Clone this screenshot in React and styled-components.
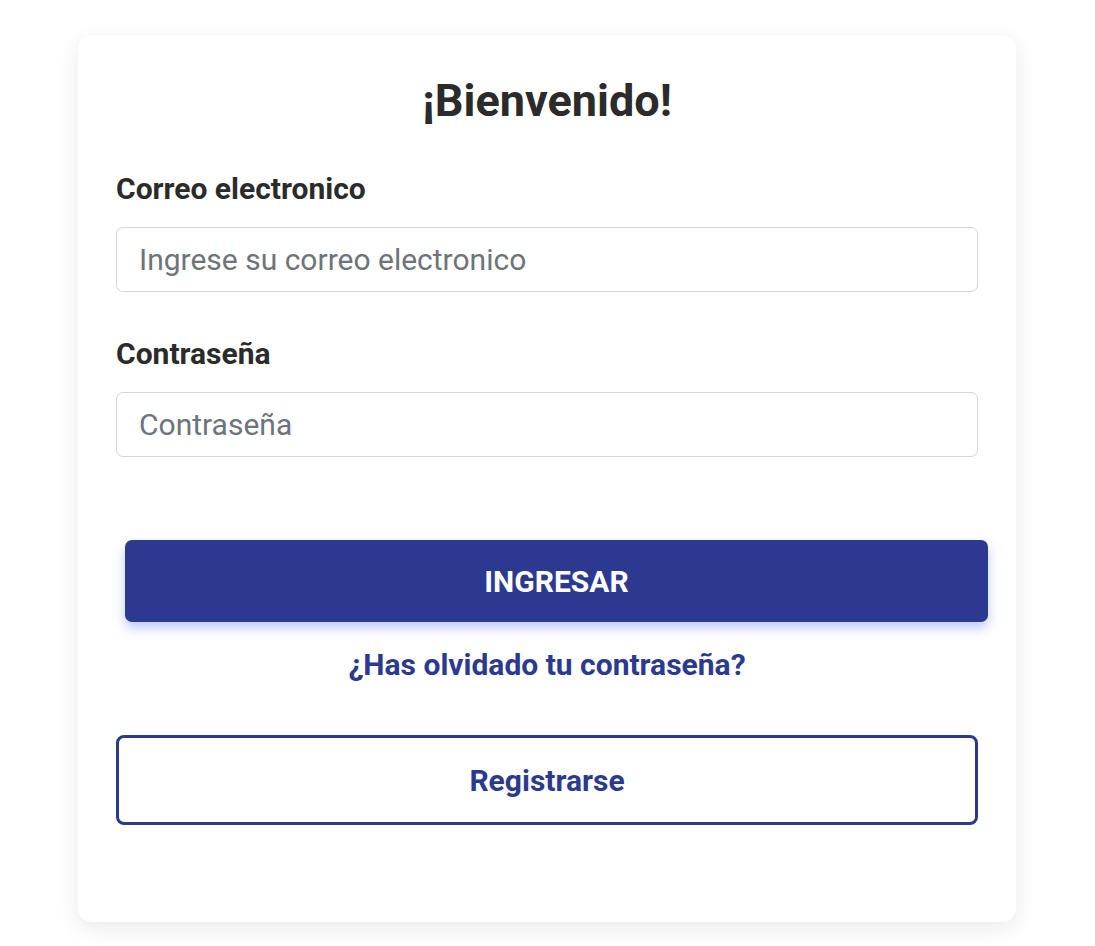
import React from "react";
import styled, { createGlobalStyle } from "styled-components";

const GlobalStyle = createGlobalStyle`
  body {
    margin: 0;
    background: #ffffff;
    font-family: Roboto, "Noto Sans", sans-serif;
  }
`;

const Page = styled.div`
  display: flex;
  justify-content: center;
  padding: 35px 1px 24px 0;
`;

const Card = styled.form`
  width: 938px;
  box-sizing: border-box;
  padding: 38px 38px 97px;
  background: #ffffff;
  border-radius: 14px;
  box-shadow: 0 6px 22px rgba(0, 0, 0, 0.09);
  display: flex;
  flex-direction: column;
`;

const Title = styled.h1`
  margin: 0 0 44px;
  text-align: center;
  font-size: 45px;
  font-weight: 700;
  color: #2b2b2b;
  line-height: 56px;
`;

const Label = styled.label`
  font-size: 30px;
  font-weight: 700;
  color: #2b2b2b;
  line-height: 32px;
  margin-bottom: 22px;
`;

const Input = styled.input`
  height: 65px;
  box-sizing: border-box;
  border: 1px solid #d3d6da;
  border-radius: 7px;
  padding: 0 22px;
  font-family: Roboto, sans-serif;
  font-size: 30px;
  color: #333;
  margin-bottom: ${(p) => p.$gap || 0}px;
  outline: none;

  &::placeholder {
    color: #6e7479;
  }
`;

const PrimaryButton = styled.button`
  height: 82px;
  margin: 83px -10px 0 9px;
  border: none;
  border-radius: 7px;
  background: #2c3990;
  color: #ffffff;
  font-family: Roboto, sans-serif;
  font-size: 30px;
  font-weight: 700;
  box-shadow: 0 6px 12px rgba(70, 100, 230, 0.35);
  cursor: pointer;
`;

const Link = styled.a`
  margin-top: 25px;
  text-align: center;
  font-size: 30px;
  font-weight: 700;
  color: #2c3990;
  text-decoration: none;
  line-height: 36px;
`;

const OutlineButton = styled.button`
  height: 90px;
  margin-top: 52px;
  border: 3px solid #2c3990;
  border-radius: 8px;
  background: #ffffff;
  color: #2c3990;
  font-family: Roboto, sans-serif;
  font-size: 30px;
  font-weight: 700;
  cursor: pointer;
`;

export default function App() {
  return (
    <>
      <GlobalStyle />
      <Page>
        <Card onSubmit={(e) => e.preventDefault()}>
          <Title>¡Bienvenido!</Title>
          <Label>Correo electronico</Label>
          <Input type="email" placeholder="Ingrese su correo electronico" $gap={46} />
          <Label>Contraseña</Label>
          <Input type="password" placeholder="Contraseña" />
          <PrimaryButton type="submit">INGRESAR</PrimaryButton>
          <Link href="#">¿Has olvidado tu contraseña?</Link>
          <OutlineButton type="button">Registrarse</OutlineButton>
        </Card>
      </Page>
    </>
  );
}
